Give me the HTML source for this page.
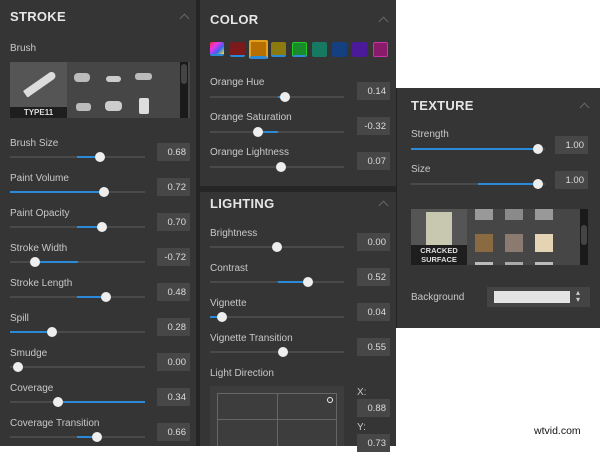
<!DOCTYPE html><html><head><meta charset="utf-8"><style>
*{margin:0;padding:0;box-sizing:border-box}
body{width:600px;height:446px;overflow:hidden;background:#fff;position:relative;font-family:"Liberation Sans",sans-serif;color:#d0d0d0}
.p{position:absolute;background:#353535}
.a{position:absolute}
.h{position:absolute;font-size:13px;font-weight:bold;color:#e6e6e6;letter-spacing:.3px}
.l{position:absolute;font-size:10px;color:#c8c8c8}
.t{position:absolute;height:2px;background:#4a4a4a}
.f{position:absolute;height:2px;background:#2a8ad8}
.k{position:absolute;width:10px;height:10px;border-radius:50%;background:#eee}
.v{position:absolute;width:33px;height:18px;background:#474747;font-size:9.5px;color:#ddd;text-align:right;padding:4px 4px 0 0}
.c{position:absolute;width:7px;height:7px;border-left:1.2px solid #666;border-top:1.2px solid #666;transform:rotate(45deg)}
.sw{position:absolute;top:42px;width:15px;height:15px;border-radius:2px}
.th{position:absolute;background:#888}
</style></head><body>
<div class="p" style="left:0;top:0;width:196px;height:446px"></div>
<div class="a" style="left:196px;top:0;width:4px;height:446px;background:#242424"></div>
<div class="h" style="left:10px;top:9px">STROKE</div><div class="c" style="left:181px;top:15px"></div>
<div class="l" style="left:10px;top:43px">Brush</div>
<div class="a" style="left:10px;top:62px;width:180px;height:56px;background:#464646"></div>
<div class="a" style="left:10px;top:62px;width:57px;height:56px;background:#555"></div>
<div class="a" style="left:22px;top:80px;width:36px;height:8px;background:#ddd;transform:rotate(-35deg);border-radius:2px 8px 8px 2px"></div>
<div class="a" style="left:10px;top:107px;width:57px;height:11px;background:#1e1e1e;color:#ddd;font-size:8px;font-weight:bold;text-align:center;padding-top:1px">TYPE11</div>
<div class="th" style="left:74px;top:73px;width:16px;height:9px;background:#bbb;border-radius:4px"></div>
<div class="th" style="left:106px;top:76px;width:15px;height:6px;background:#ccc;border-radius:3px"></div>
<div class="th" style="left:135px;top:73px;width:17px;height:7px;background:#bbb;border-radius:3px"></div>
<div class="th" style="left:76px;top:103px;width:15px;height:8px;background:#bbb;border-radius:3px"></div>
<div class="th" style="left:105px;top:101px;width:17px;height:10px;background:#ccc;border-radius:4px"></div>
<div class="th" style="left:139px;top:98px;width:10px;height:16px;background:#ddd;border-radius:2px"></div>
<div class="a" style="left:180px;top:62px;width:8px;height:56px;background:#1a1a1a"></div>
<div class="a" style="left:181px;top:64px;width:6px;height:20px;background:#444;border-radius:3px"></div>

<div class="l" style="left:10px;top:138px">Brush Size</div><div class="t" style="left:10px;top:156px;width:135px"></div><div class="f" style="left:77px;top:156px;width:23px"></div><div class="k" style="left:95px;top:152px"></div><div class="v" style="left:157px;top:143px">0.68</div>
<div class="l" style="left:10px;top:173px">Paint Volume</div><div class="t" style="left:10px;top:191px;width:135px"></div><div class="f" style="left:10px;top:191px;width:94px"></div><div class="k" style="left:99px;top:187px"></div><div class="v" style="left:157px;top:178px">0.72</div>
<div class="l" style="left:10px;top:208px">Paint Opacity</div><div class="t" style="left:10px;top:226px;width:135px"></div><div class="f" style="left:77px;top:226px;width:25px"></div><div class="k" style="left:97px;top:222px"></div><div class="v" style="left:157px;top:213px">0.70</div>
<div class="l" style="left:10px;top:243px">Stroke Width</div><div class="t" style="left:10px;top:261px;width:135px"></div><div class="f" style="left:35px;top:261px;width:43px"></div><div class="k" style="left:30px;top:257px"></div><div class="v" style="left:157px;top:248px">-0.72</div>
<div class="l" style="left:10px;top:278px">Stroke Length</div><div class="t" style="left:10px;top:296px;width:135px"></div><div class="f" style="left:77px;top:296px;width:29px"></div><div class="k" style="left:101px;top:292px"></div><div class="v" style="left:157px;top:283px">0.48</div>
<div class="l" style="left:10px;top:313px">Spill</div><div class="t" style="left:10px;top:331px;width:135px"></div><div class="f" style="left:10px;top:331px;width:42px"></div><div class="k" style="left:47px;top:327px"></div><div class="v" style="left:157px;top:318px">0.28</div>
<div class="l" style="left:10px;top:348px">Smudge</div><div class="t" style="left:10px;top:366px;width:135px"></div><div class="k" style="left:13px;top:362px"></div><div class="v" style="left:157px;top:353px">0.00</div>
<div class="l" style="left:10px;top:383px">Coverage</div><div class="t" style="left:10px;top:401px;width:135px"></div><div class="f" style="left:58px;top:401px;width:87px"></div><div class="k" style="left:53px;top:397px"></div><div class="v" style="left:157px;top:388px">0.34</div>
<div class="l" style="left:10px;top:418px">Coverage Transition</div><div class="t" style="left:10px;top:436px;width:135px"></div><div class="f" style="left:77px;top:436px;width:20px"></div><div class="k" style="left:92px;top:432px"></div><div class="v" style="left:157px;top:423px">0.66</div>

<div class="p" style="left:200px;top:0;width:196px;height:446px"></div>
<div class="a" style="left:200px;top:186px;width:196px;height:6px;background:#262626"></div>
<div class="h" style="left:210px;top:12px">COLOR</div><div class="c" style="left:380px;top:18px"></div>
<div class="sw" style="left:210px;background:linear-gradient(135deg,#e33,#e3e,#36e,#ee3);border-bottom:2px solid #2a8ad8;height:14px;width:14px"></div>
<div class="sw" style="left:230px;background:#7a1a1a;border-bottom:2px solid #2a8ad8"></div>
<div class="sw" style="left:249px;top:40px;width:19px;height:19px;background:#b66f00;border:2px solid #e0a020;border-bottom:3px solid #2a8ad8"></div>
<div class="sw" style="left:271px;background:#8a7a10;border-bottom:2px solid #2a8ad8"></div>
<div class="sw" style="left:292px;background:#1a8a2a;border:1px solid #2c2;border-bottom:2px solid #2a8ad8"></div>
<div class="sw" style="left:312px;background:#167a62"></div>
<div class="sw" style="left:332px;background:#143f80"></div>
<div class="sw" style="left:352px;background:#4a1a9a"></div>
<div class="sw" style="left:373px;background:#8a1a6a;border:1px solid #c3a"></div>
<div class="l" style="left:210px;top:77px">Orange Hue</div><div class="t" style="left:210px;top:96px;width:134px"></div><div class="f" style="left:278px;top:96px;width:7px"></div><div class="k" style="left:280px;top:92px"></div><div class="v" style="left:357px;top:82px">0.14</div>
<div class="l" style="left:210px;top:112px">Orange Saturation</div><div class="t" style="left:210px;top:131px;width:134px"></div><div class="f" style="left:258px;top:131px;width:20px"></div><div class="k" style="left:253px;top:127px"></div><div class="v" style="left:357px;top:117px">-0.32</div>
<div class="l" style="left:210px;top:147px">Orange Lightness</div><div class="t" style="left:210px;top:166px;width:134px"></div><div class="f" style="left:278px;top:166px;width:3px"></div><div class="k" style="left:276px;top:162px"></div><div class="v" style="left:357px;top:152px">0.07</div>
<div class="h" style="left:210px;top:196px">LIGHTING</div><div class="c" style="left:380px;top:202px"></div>
<div class="l" style="left:210px;top:228px">Brightness</div><div class="t" style="left:210px;top:246px;width:134px"></div><div class="k" style="left:272px;top:242px"></div><div class="v" style="left:357px;top:233px">0.00</div>
<div class="l" style="left:210px;top:263px">Contrast</div><div class="t" style="left:210px;top:281px;width:134px"></div><div class="f" style="left:278px;top:281px;width:30px"></div><div class="k" style="left:303px;top:277px"></div><div class="v" style="left:357px;top:268px">0.52</div>
<div class="l" style="left:210px;top:298px">Vignette</div><div class="t" style="left:210px;top:316px;width:134px"></div><div class="f" style="left:210px;top:316px;width:12px"></div><div class="k" style="left:217px;top:312px"></div><div class="v" style="left:357px;top:303px">0.04</div>
<div class="l" style="left:210px;top:333px">Vignette Transition</div><div class="t" style="left:210px;top:351px;width:134px"></div><div class="k" style="left:278px;top:347px"></div><div class="v" style="left:357px;top:338px">0.55</div>
<div class="l" style="left:210px;top:368px">Light Direction</div>
<div class="a" style="left:210px;top:386px;width:134px;height:60px;background:#3d3d3d"></div>
<div class="a" style="left:217px;top:393px;width:120px;height:53px;border:1px solid #666;border-bottom:none"></div>
<div class="a" style="left:277px;top:393px;width:1px;height:53px;background:#666"></div>
<div class="a" style="left:217px;top:419px;width:120px;height:1px;background:#666"></div>
<div class="a" style="left:327px;top:397px;width:6px;height:6px;border:1.5px solid #eee;border-radius:50%"></div>
<div class="l" style="left:357px;top:387px">X:</div><div class="v" style="left:357px;top:399px">0.88</div>
<div class="l" style="left:357px;top:422px">Y:</div><div class="v" style="left:357px;top:434px">0.73</div>

<div class="p" style="left:396px;top:88px;width:204px;height:240px;border-left:1px solid #222"></div>
<div class="h" style="left:411px;top:98px">TEXTURE</div><div class="c" style="left:581px;top:104px"></div>
<div class="l" style="left:411px;top:129px">Strength</div><div class="t" style="left:411px;top:148px;width:134px"></div><div class="f" style="left:411px;top:148px;width:127px"></div><div class="k" style="left:533px;top:144px"></div><div class="v" style="left:555px;top:136px">1.00</div>
<div class="l" style="left:411px;top:164px">Size</div><div class="t" style="left:411px;top:183px;width:134px"></div><div class="f" style="left:478px;top:183px;width:60px"></div><div class="k" style="left:533px;top:179px"></div><div class="v" style="left:555px;top:171px">1.00</div>
<div class="a" style="left:411px;top:209px;width:169px;height:56px;background:#464646"></div>
<div class="a" style="left:411px;top:209px;width:56px;height:56px;background:#555"></div>
<div class="a" style="left:426px;top:212px;width:26px;height:34px;background:#c8c8b0"></div>
<div class="a" style="left:411px;top:245px;width:56px;height:20px;background:#1e1e1e;color:#ddd;font-size:7.5px;font-weight:bold;text-align:center;line-height:9px;padding-top:1px">CRACKED<br>SURFACE</div>
<div class="th" style="left:475px;top:209px;width:18px;height:11px;background:#999"></div>
<div class="th" style="left:505px;top:209px;width:18px;height:11px;background:#8a8a8a"></div>
<div class="th" style="left:535px;top:209px;width:18px;height:11px;background:#999"></div>
<div class="th" style="left:475px;top:234px;width:18px;height:18px;background:#8a6a40"></div>
<div class="th" style="left:505px;top:234px;width:18px;height:18px;background:#8a7a70"></div>
<div class="th" style="left:535px;top:234px;width:18px;height:18px;background:#e4d4b4"></div>
<div class="th" style="left:475px;top:262px;width:18px;height:3px;background:#bbb"></div>
<div class="th" style="left:505px;top:262px;width:18px;height:3px;background:#aaa"></div>
<div class="th" style="left:535px;top:262px;width:18px;height:3px;background:#bbb"></div>
<div class="a" style="left:580px;top:209px;width:8px;height:56px;background:#1a1a1a"></div>
<div class="a" style="left:581px;top:225px;width:6px;height:20px;background:#444;border-radius:3px"></div>
<div class="l" style="left:411px;top:292px">Background</div>
<div class="a" style="left:487px;top:287px;width:103px;height:20px;background:#444"></div>
<div class="a" style="left:494px;top:291px;width:76px;height:12px;background:#e4e4e4"></div>
<div class="a" style="left:576px;top:289px;font-size:8px;color:#ccc;line-height:7px">▴<br>▾</div>
<div class="a" style="left:534px;top:425px;font-size:10.5px;color:#111">wtvid.com</div>
</body></html>
